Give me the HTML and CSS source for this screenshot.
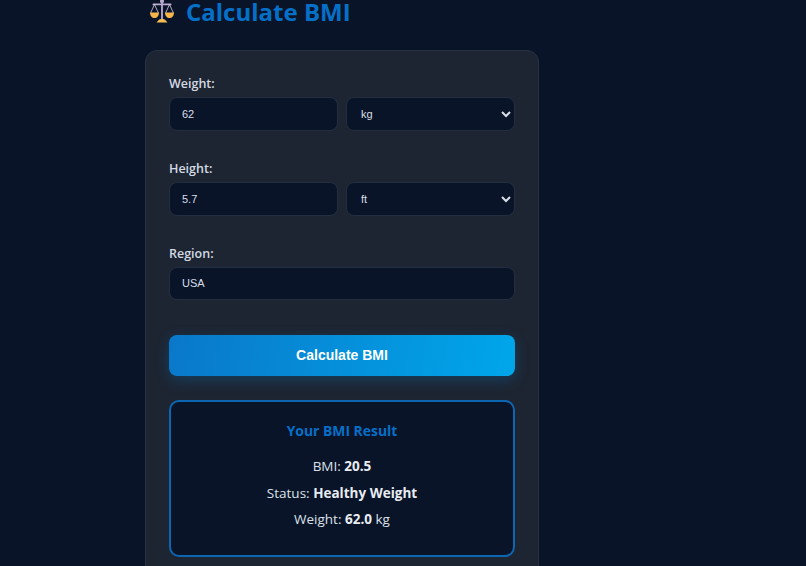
FILE: index.html
```html
<!DOCTYPE html>
<html lang="en">

<head>
    <meta charset="UTF-8">
    <meta name="viewport" content="width=device-width, initial-scale=1.0">
    <title>Calculate BMI</title>
    <link rel="stylesheet" href="styles.css">
</head>

<body>
    <div class="container">
        <h1 class="title">
            <!-- balance scale icon -->
            <svg class="title-icon" viewBox="0 0 26 26" width="26" height="26" aria-hidden="true">
                <rect x="12" y="2" width="2" height="19" fill="#a99bc0"/>
                <circle cx="13" cy="2.200" r="2" fill="#b8aacd"/>
                <rect x="3.500" y="4.500" width="19" height="1.800" rx="0.900" fill="#b8aacd"/>
                <path d="M5.500 5.400 1.600 14M5.500 5.400 9.400 14M20.500 5.400 16.600 14M20.500 5.400 24.400 14" stroke="#d6cbe0" stroke-width="0.800" fill="none"/>
                <path d="M1 13.500h9c0 3.500-2 5.500-4.500 5.500S1 17 1 13.500z" fill="#f4b54a"/>
                <path d="M16 13.500h9c0 3.500-2 5.500-4.500 5.500S16 17 16 13.500z" fill="#f4b54a"/>
                <path d="M9.500 21.200c1-1 2-1.200 3.500-1.200s2.500.2 3.500 1.200l2 2.300H7.500z" fill="#f6bd52"/>
            </svg>
            Calculate BMI
        </h1>

        <form class="card">
            <div class="form-group">
                <label for="weight">Weight:</label>
                <div class="field-row">
                    <input type="text" id="weight" value="62">
                    <select id="weightUnit">
                        <option>kg</option>
                        <option>lb</option>
                    </select>
                </div>
            </div>

            <div class="form-group">
                <label for="height">Height:</label>
                <div class="field-row">
                    <input type="text" id="height" value="5.7">
                    <select id="heightUnit">
                        <option>ft</option>
                        <option>cm</option>
                    </select>
                </div>
            </div>

            <div class="form-group">
                <label for="region">Region:</label>
                <input type="text" id="region" class="region-input" value="USA">
            </div>

            <button type="button" class="btn">Calculate BMI</button>

            <div class="result">
                <h3>Your BMI Result</h3>
                <p>BMI: <strong>20.5</strong></p>
                <p>Status: <strong>Healthy Weight</strong></p>
                <p>Weight: <strong>62.0</strong> kg</p>
            </div>
        </form>
    </div>
</body>

</html>
```

FILE: styles.css
```css
html,
body {
    height: 566px;
    overflow: hidden;
}

body {
    font-family: "Open Sans", "Noto Sans", sans-serif;
    background-color: #0a1428;
    color: #e2e8f0;
    margin: 0;
}

.container {
    width: 394px;
    margin-left: 145px;
}

.title {
    display: flex;
    align-items: center;
    gap: 11px;
    height: 24px;
    margin: 0 0 26px 4px;
    font-size: 24px;
    font-weight: 700;
    line-height: 24px;
    color: #0570c8;
}

.title-icon {
    flex: none;
}

.card {
    background: #1d2532;
    border: 1px solid #263144;
    border-radius: 12px;
    padding: 24px 23px;
    height: 560px;
}

.form-group {
    margin-bottom: 29px;
}

.form-group label {
    display: block;
    height: 22px;
    font-size: 12.500px;
    font-weight: 600;
    line-height: 18px;
    color: #d3d9e2;
}

.field-row {
    display: grid;
    grid-template-columns: 1fr 1fr;
    gap: 8px;
}

input,
select {
    display: block;
    width: 100%;
    height: 34px;
    box-sizing: border-box;
    padding: 0 12px;
    font-family: "Liberation Sans", Arial, sans-serif;
    font-size: 11px;
    color: #d8dee8;
    background: #0a1428;
    border: 1px solid #232f41;
    border-radius: 8px;
}

select {
    padding-left: 10px;
}

.region-input {
    height: 33px;
    padding-bottom: 1px;
}

.btn {
    display: block;
    width: 100%;
    height: 41px;
    margin-top: 35px;
    padding: 0 0 1px;
    font-family: "Liberation Sans", Arial, sans-serif;
    font-size: 14px;
    font-weight: 700;
    color: #fff;
    background: linear-gradient(100deg, #0a78ca, #00a6ea);
    border: none;
    border-radius: 8px;
    box-shadow: 0 4px 14px rgba(0, 136, 220, 0.25);
    cursor: pointer;
}

.result {
    box-sizing: border-box;
    height: 157px;
    margin-top: 24px;
    padding: 20px 16px 0;
    text-align: center;
    background: #0a1428;
    border: 2px solid #0d66b2;
    border-radius: 10px;
}

.result h3 {
    margin: 0 0 13px;
    font-size: 13.900px;
    font-weight: 700;
    line-height: 18px;
    color: #0570c8;
}

.result p {
    margin: 0;
    font-size: 13.500px;
    line-height: 26.500px;
    color: #dbe1ea;
}

.result strong {
    color: #e8ecf2;
}
```
